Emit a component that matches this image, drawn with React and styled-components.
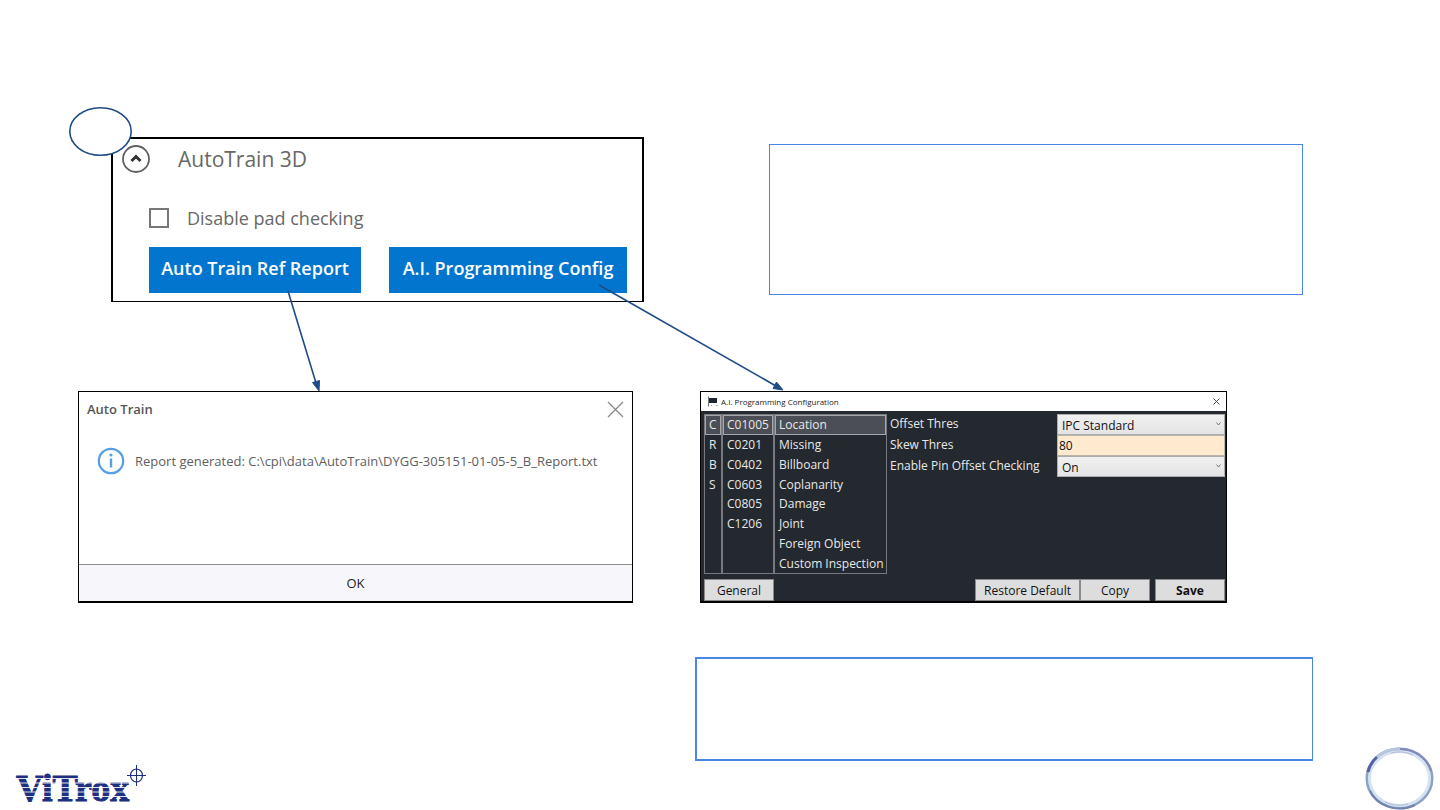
import React, { useState } from "react";
import styled, { createGlobalStyle } from "styled-components";

const GlobalStyle = createGlobalStyle`
  * {
    box-sizing: border-box;
  }

  body {
    margin: 0;
    background-color: #fff;
    font-family: "Open Sans", "Noto Sans", sans-serif;
  }

  button, input, select {
    font-family: inherit;
    margin: 0;
  }
`;

const Slide = styled.main`
  display: flex;
  flex-direction: column;
  min-height: 100vh;
  padding-top: 137px;
`;

const TopRow = styled.div`
  display: grid;
  grid-template-columns: 533fr 534fr;
  column-gap: 125px;
  align-items: center;
  padding: 0 137px 0 111px;
`;

const DialogRow = styled.div`
  display: grid;
  grid-template-columns: 555fr 527fr;
  column-gap: 67px;
  margin-top: 89px;
  padding: 0 213px 0 78px;
`;

const BottomRow = styled.footer`
  display: flex;
  flex: 1;
  justify-content: space-between;
  align-items: flex-end;
  margin-top: 54px;
  padding: 0 6px 0 15px;
`;

const Note = styled.section`
  height: ${(props) => props.$height};
  border: 1px solid #4a86e8;
  background-color: #fff;
`;

const BottomNote = styled(Note)`
  flex: 0 1 618px;
  align-self: flex-start;
  margin-left: auto;
  margin-right: 52px;
  border-width: 2px 1px 2px 2px;
`;

/* AutoTrain 3D panel */

const TrainPanel = styled.section`
  position: relative;
  height: 165px;
  padding: 5px 15px 0 8px;
  border: 2px solid #000;
  border-bottom-width: 1px;
`;

const StepBadge = styled.svg`
  position: absolute;
  top: -32px;
  left: -44px;
`;

const Arrows = styled.svg`
  position: absolute;
  top: 137px;
  left: 165px;
  z-index: 1;
  pointer-events: none;
`;

const PanelHeader = styled.header`
  display: flex;
  align-items: center;
  gap: 27px;
  height: 30px;
`;

const CollapseButton = styled.button`
  display: flex;
  padding: 0;
  border: 0;
  background: none;
`;

const PanelTitle = styled.h2`
  margin: 0;
  color: #686868;
  font-size: 21px;
  font-weight: 400;
  line-height: 28px;
`;

const CheckRow = styled.label`
  display: flex;
  align-items: center;
  gap: 18px;
  margin: 30px 0 0 28px;
  color: #686868;
  font-size: 18px;
  line-height: 28px;
`;

const Checkbox = styled.input`
  appearance: none;
  width: 20px;
  height: 20px;
  margin: 0;
  border: 2px solid #777;
  background-color: #fff;

  &:checked {
    background-color: #0275cf;
  }
`;

const PanelActions = styled.div`
  display: flex;
  justify-content: space-between;
  margin: 15px 0 0 28px;
`;

const BlueButton = styled.button`
  height: 46px;
  width: ${(props) => props.$width};
  padding: 0 0 4px;
  border: 0;
  background-color: #0275cf;
  color: #fff;
  font-size: 18px;
  font-weight: 600;
  white-space: nowrap;
`;

/* Auto Train message */

const Message = styled.section`
  display: flex;
  flex-direction: column;
  height: 212px;
  border: 1px solid #000;
  border-bottom-width: 2px;
`;

const MessageHeader = styled.header`
  display: flex;
  justify-content: space-between;
  align-items: center;
  height: 34px;
  padding: 0 8px;
`;

const MessageTitle = styled.h2`
  margin: 0;
  color: #555;
  font-size: 13px;
  font-weight: 600;
`;

const CloseButton = styled.button`
  display: flex;
  padding: 0;
  border: 0;
  background: none;
`;

const MessageBody = styled.div`
  display: flex;
  flex: 1;
  align-items: flex-start;
  gap: 10px;
  padding: 21px 18px 0;
  color: #606060;
  font-size: 13px;
  line-height: 28px;
  white-space: nowrap;
`;

const MessageText = styled.p`
  margin: 0;
`;

const OkButton = styled.button`
  height: 37px;
  padding: 0;
  border: 0;
  border-top: 1px solid #8d8e92;
  background-color: #f7f7fb;
  color: #222;
  font-size: 13px;
`;

/* A.I. Programming Configuration window */

const Config = styled.section`
  display: flex;
  flex-direction: column;
  height: 212px;
  border: 1px solid #000;
  border-bottom-width: 2px;
  background-color: #24282f;
`;

const ConfigHeader = styled.header`
  display: flex;
  align-items: center;
  gap: 3px;
  height: 19px;
  padding: 0 6px;
  background-color: #fff;
`;

const ConfigTitle = styled.h2`
  flex: 1;
  margin: 0;
  color: #222;
  font-size: 8px;
  font-weight: 400;
`;

const ConfigBody = styled.div`
  display: flex;
  flex: 1;
  padding: 3px 1px 0 3px;
`;

const Lists = styled.div`
  display: flex;
  height: 160px;
  border: 1px solid #77797f;
`;

const List = styled.ul`
  display: grid;
  grid-template-columns: minmax(0, 1fr);
  grid-template-rows: repeat(8, minmax(0, 1fr));
  width: ${(props) => props.$width};
  margin: 0;
  padding: 0;
  list-style: none;

  & + & {
    border-left: 2px solid #77797f;
  }
`;

const ListButton = styled.button`
  display: block;
  width: 100%;
  height: 100%;
  padding: 1px 0 0 3px;
  border: 1px solid ${(props) => (props.$active ? "#a5a6aa" : "transparent")};
  background-color: ${(props) => (props.$active ? "#4c4e55" : "transparent")};
  color: #e8e8e8;
  font-size: 12px;
  line-height: 16px;
  text-align: left;
  white-space: nowrap;
`;

const Settings = styled.div`
  flex: 1;
  padding-left: 3px;
`;

const Setting = styled.div`
  display: flex;
  justify-content: space-between;
  height: 21px;
`;

const SettingLabel = styled.label`
  color: #e8e8e8;
  font-size: 12px;
  line-height: 20px;
  white-space: nowrap;
`;

const SelectBox = styled.div`
  display: grid;
  width: 168px;
  align-items: center;

  & > * {
    grid-area: 1 / 1;
  }

  & > svg {
    justify-self: end;
    margin: 0 4px 2px 0;
    pointer-events: none;
  }
`;

const Select = styled.select`
  appearance: none;
  width: 100%;
  height: 21px;
  padding: 1px 4px 0;
  border: 1px solid #acacac;
  border-radius: 0;
  background: linear-gradient(#f0f0f0, #e4e4e4);
  color: #111;
  font-size: 12px;
`;

const TextBox = styled.input`
  width: 168px;
  height: 21px;
  padding: 0 1px;
  border: 1px solid #b9b3a8;
  background-color: #ffead0;
  color: #111;
  font-size: 12px;
`;

const ConfigActions = styled.footer`
  display: flex;
  padding: 0 1px 0 3px;
`;

const GreyButton = styled.button`
  width: ${(props) => props.$width || "70px"};
  height: 22px;
  margin-left: ${(props) => props.$gap || "0"};
  padding: 0;
  border: 1px solid #8a8a8a;
  background-color: #dddddd;
  color: #111;
  font-size: 12px;
  font-weight: ${(props) => (props.$bold ? 700 : 400)};
  white-space: nowrap;
`;

const Logo = styled.svg`
  flex: none;
`;

const Ring = styled.svg`
  flex: none;
`;

const LISTS = [
  { name: "type", width: "16px", items: ["C", "R", "B", "S"] },
  {
    name: "package",
    width: "52px",
    items: ["C01005", "C0201", "C0402", "C0603", "C0805", "C1206"],
  },
  {
    name: "defect",
    width: "113px",
    items: [
      "Location",
      "Missing",
      "Billboard",
      "Coplanarity",
      "Damage",
      "Joint",
      "Foreign Object",
      "Custom Inspection",
    ],
  },
];

const Dropdown = ({ id, options }) => (
  <SelectBox>
    <Select id={id}>
      {options.map((option) => (
        <option key={option}>{option}</option>
      ))}
    </Select>
    <svg width="5" height="4" viewBox="0 0 5 4" aria-hidden="true">
      <path d="M0.5 0.5 L2.5 3 L4.5 0.5" fill="none" stroke="#777" />
    </svg>
  </SelectBox>
);

const AutoTrainPanel = () => (
  <TrainPanel>
    <PanelHeader>
      <CollapseButton type="button" aria-label="Collapse">
        <svg width="30" height="30" viewBox="0 0 30 30">
          <circle cx="15" cy="15" r="13" fill="#fff" stroke="#606060" strokeWidth="1.8" />
          <path d="M10.5 17 L15 12.5 L19.5 17" fill="none" stroke="#333" strokeWidth="3" />
        </svg>
      </CollapseButton>
      <PanelTitle>AutoTrain 3D</PanelTitle>
    </PanelHeader>
    <CheckRow>
      <Checkbox type="checkbox" />
      Disable pad checking
    </CheckRow>
    <PanelActions>
      <BlueButton type="button" $width="212px">Auto Train Ref Report</BlueButton>
      <BlueButton type="button" $width="238px">A.I. Programming Config</BlueButton>
    </PanelActions>
    <StepBadge width="63" height="49" viewBox="0 0 63 49" aria-hidden="true">
      <ellipse cx="31.5" cy="24.5" rx="30.7" ry="23.7" fill="#fff" stroke="#1f4b87" strokeWidth="1.6" />
    </StepBadge>
    <Arrows width="520" height="120" viewBox="0 0 520 120" aria-hidden="true">
      <g stroke="#1f4b87" fill="#1f4b87">
        <path d="M10 15 L38 107" strokeWidth="1.6" />
        <path d="M41 115 L34.5 106.5 L41.5 104.5 Z" strokeWidth="1" />
        <path d="M321 9 L498 110" strokeWidth="1.6" />
        <path d="M505 114 L495 112.5 L498.5 106 Z" strokeWidth="1" />
      </g>
    </Arrows>
  </TrainPanel>
);

const AutoTrainMessage = () => (
  <Message>
    <MessageHeader>
      <MessageTitle>Auto Train</MessageTitle>
      <CloseButton type="button" aria-label="Close message">
        <svg width="17" height="17" viewBox="0 0 17 17">
          <path d="M1 1 L16 16 M16 1 L1 16" stroke="#888" strokeWidth="1.3" />
        </svg>
      </CloseButton>
    </MessageHeader>
    <MessageBody>
      <svg width="28" height="28" viewBox="0 0 28 28" aria-hidden="true">
        <circle cx="14" cy="14" r="12.2" fill="none" stroke="#55a0e4" strokeWidth="2.2" />
        <path d="M14 11.5 V20.5" stroke="#55a0e4" strokeWidth="2.4" />
        <circle cx="14" cy="8" r="1.6" fill="#55a0e4" />
      </svg>
      <MessageText>
        {"Report generated: C:\\cpi\\data\\AutoTrain\\DYGG-305151-01-05-5_B_Report.txt"}
      </MessageText>
    </MessageBody>
    <OkButton type="button">OK</OkButton>
  </Message>
);

const ConfigWindow = () => {
  const [selected, setSelected] = useState({
    type: "C",
    package: "C01005",
    defect: "Location",
  });

  return (
    <Config>
      <ConfigHeader>
        <svg width="11" height="11" viewBox="0 0 11 11" aria-hidden="true">
          <path d="M1.5 0.5 V10.5" stroke="#777" />
          <path d="M2 2 H10 V7 H2 Z" fill="#1d2733" />
          <path d="M4 9.5 H5 M9 9.5 H10.5" stroke="#999" />
        </svg>
        <ConfigTitle>A.I. Programming Configuration</ConfigTitle>
        <CloseButton type="button" aria-label="Close configuration">
          <svg width="7" height="7" viewBox="0 0 7 7">
            <path d="M0.5 0.5 L6.5 6.5 M6.5 0.5 L0.5 6.5" stroke="#333" strokeWidth="0.9" />
          </svg>
        </CloseButton>
      </ConfigHeader>
      <ConfigBody>
        <Lists>
          {LISTS.map((list) => (
            <List key={list.name} $width={list.width}>
              {list.items.map((item) => (
                <li key={item}>
                  <ListButton
                    type="button"
                    $active={selected[list.name] === item}
                    onClick={() => setSelected({ ...selected, [list.name]: item })}
                  >
                    {item}
                  </ListButton>
                </li>
              ))}
            </List>
          ))}
        </Lists>
        <Settings>
          <Setting>
            <SettingLabel htmlFor="offset">Offset Thres</SettingLabel>
            <Dropdown id="offset" options={["IPC Standard"]} />
          </Setting>
          <Setting>
            <SettingLabel htmlFor="skew">Skew Thres</SettingLabel>
            <TextBox id="skew" type="text" defaultValue="80" />
          </Setting>
          <Setting>
            <SettingLabel htmlFor="pin">Enable Pin Offset Checking</SettingLabel>
            <Dropdown id="pin" options={["On", "Off"]} />
          </Setting>
        </Settings>
      </ConfigBody>
      <ConfigActions>
        <GreyButton type="button">General</GreyButton>
        <GreyButton type="button" $width="105px" $gap="auto">Restore Default</GreyButton>
        <GreyButton type="button">Copy</GreyButton>
        <GreyButton type="button" $gap="5px" $bold>Save</GreyButton>
      </ConfigActions>
    </Config>
  );
};

const App = () => (
  <>
    <GlobalStyle />
    <Slide>
      <TopRow>
        <AutoTrainPanel />
        <Note $height="151px" />
      </TopRow>
      <DialogRow>
        <AutoTrainMessage />
        <ConfigWindow />
      </DialogRow>
      <BottomRow>
        <Logo width="132" height="48" viewBox="0 0 132 48">
          <text
            x="1"
            y="39"
            fill="#1c2f80"
            stroke="#1c2f80"
            strokeWidth="1"
            fontFamily="Liberation Serif, serif"
            fontSize="38"
            fontWeight="700"
          >
            ViTrox
          </text>
          <path
            d="M0 16.5 H117 M0 21 H117 M0 25.5 H117 M0 30 H117 M0 34.5 H117"
            stroke="#fff"
            strokeWidth="1"
            opacity="0.85"
          />
          <g fill="none" stroke="#1c2f80">
            <ellipse cx="121.5" cy="13.5" rx="6" ry="6.5" strokeWidth="1.2" />
            <path d="M121.5 3 V24 M112 13.5 H131" />
          </g>
        </Logo>
        <BottomNote $height="104px" />
        <Ring width="69" height="63" viewBox="0 0 69 63" aria-hidden="true">
          <g fill="none">
            <ellipse cx="34.5" cy="31.5" rx="32.5" ry="29.5" stroke="#8ea3c4" strokeWidth="3" />
            <ellipse cx="34.5" cy="31.5" rx="30" ry="27" stroke="#d5e2ef" strokeWidth="3" />
            <path d="M3 25 A32.5 29.5 0 0 1 12 10" stroke="#5560a5" strokeWidth="3" />
            <path d="M12 10 A32.5 29.5 0 0 1 35 2" stroke="#b5c6dd" strokeWidth="3" />
            <path d="M35 2 A32.5 29.5 0 0 1 66 24" stroke="#8388bd" strokeWidth="2" />
            <path d="M5 44 A32.5 29.5 0 0 0 50 58" stroke="#7184b0" strokeWidth="2" />
            <path d="M26 6 A30 27 0 0 1 48 8 M20 55 A30 27 0 0 0 43 57" stroke="#b3bbd8" strokeWidth="1" />
          </g>
        </Ring>
      </BottomRow>
    </Slide>
  </>
);

export default App;
